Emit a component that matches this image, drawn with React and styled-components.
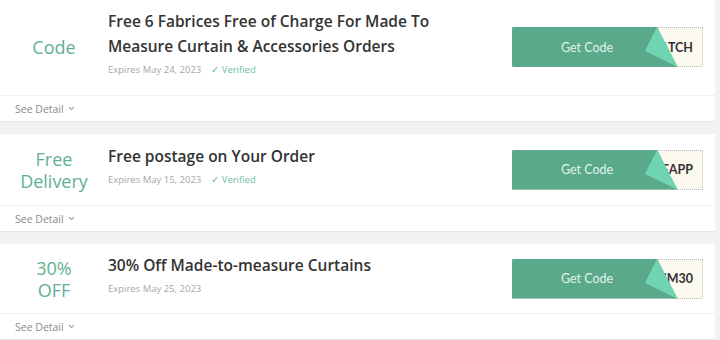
import React from 'react';
import styled, { createGlobalStyle } from 'styled-components';

const GlobalStyle = createGlobalStyle`
  html, body {
    margin: 0;
    padding: 0;
    background: #f2f2f2;
  }
  * { box-sizing: border-box; }
`;

const List = styled.div`
  width: 715px;
  display: flex;
  flex-direction: column;
  gap: 12px;
  font-family: 'Open Sans', Lato, sans-serif;
`;

const Card = styled.div`
  background: #fff;
  border-bottom: 1px solid #e8e8e8;
`;

const Main = styled.div`
  display: flex;
  align-items: center;
  padding: ${(p) => p.pad || '10px 0'};
  border-bottom: 1px solid #efefef;
`;

const Badge = styled.div`
  width: 108px;
  flex-shrink: 0;
  text-align: center;
  color: #5fb094;
  font-size: 18px;
  line-height: 22px;
`;

const Info = styled.div`
  flex: 1;
  min-width: 0;
`;

const Title = styled.div`
  color: #333;
  font-weight: 600;
  font-size: 15.5px;
  line-height: 25px;
  max-width: 345px;
`;

const Meta = styled.div`
  display: flex;
  gap: 10px;
  font-size: 9.5px;
  line-height: 18px;
  color: #a8a8a8;
  margin: 2px 0 6px;
`;

const Verified = styled.span`
  color: #6cc19f;
`;

const CodeButton = styled.div`
  position: relative;
  width: 191px;
  height: 40px;
  margin-right: 12px;
  flex-shrink: 0;
  font-family: Lato, sans-serif;
`;

const CodeBox = styled.div`
  position: absolute;
  inset: 0;
  border: 1px dotted #b9b9b9;
  background: #fcf9ef;
  display: flex;
  align-items: center;
  justify-content: flex-end;
  padding-right: 9px;
  font-size: 12.5px;
  font-weight: 700;
  color: #333;
  overflow: hidden;
  white-space: nowrap;
`;

const GreenFace = styled.div`
  position: absolute;
  inset: 0;
  background: #5aa98b;
  border-radius: 2px;
  clip-path: polygon(0 0, 145px 0, 165px 100%, 0 100%);
  color: #e3f3ec;
  font-size: 12.5px;
  display: flex;
  align-items: center;
  padding-left: 49px;
`;

const Flap = styled.svg`
  position: absolute;
  left: 130px;
  top: 0;
`;

const Detail = styled.div`
  display: flex;
  align-items: center;
  gap: 4px;
  height: 25px;
  padding-left: 15px;
  font-size: 10.5px;
  color: #8a8a8a;
`;

const coupons = [
  {
    badge: ['Code'],
    title: 'Free 6 Fabrices Free of Charge For Made To Measure Curtain & Accessories Orders',
    expires: 'Expires May 24, 2023',
    verified: true,
    code: 'SWATCH',
    pad: '9px 0 10px',
  },
  {
    badge: ['Free', 'Delivery'],
    title: 'Free postage on Your Order',
    expires: 'Expires May 15, 2023',
    verified: true,
    code: 'FREEAPP',
    pad: '10px 0',
  },
  {
    badge: ['30%', 'OFF'],
    title: '30% Off Made-to-measure Curtains',
    expires: 'Expires May 25, 2023',
    verified: false,
    code: 'CM30',
    pad: '9px 0',
  },
];

const Chevron = () => (
  <svg width="7" height="5" viewBox="0 0 7 5">
    <path d="M1 1.2 L3.5 3.6 L6 1.2" fill="none" stroke="#999" strokeWidth="1.1" />
  </svg>
);

const App = () => (
  <>
    <GlobalStyle />
    <List>
      {coupons.map((c) => (
        <Card key={c.title}>
          <Main pad={c.pad}>
            <Badge>
              {c.badge.map((b) => (
                <div key={b}>{b}</div>
              ))}
            </Badge>
            <Info>
              <Title>{c.title}</Title>
              <Meta>
                <span>{c.expires}</span>
                {c.verified && <Verified>✓ Verified</Verified>}
              </Meta>
            </Info>
            <CodeButton>
              <CodeBox>{c.code}</CodeBox>
              <GreenFace>Get Code</GreenFace>
              <Flap width="40" height="40" viewBox="0 0 40 40">
                <polygon points="15,0 3,24 36,40" fill="#6fd4b2" />
              </Flap>
            </CodeButton>
          </Main>
          <Detail>
            See Detail <Chevron />
          </Detail>
        </Card>
      ))}
    </List>
  </>
);

export default App;
